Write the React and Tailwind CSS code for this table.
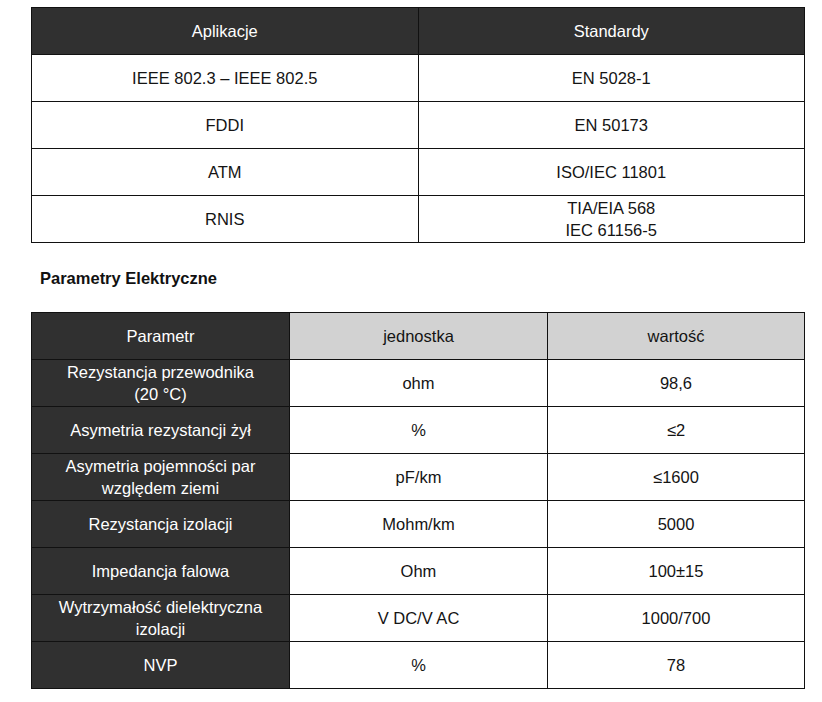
const apps = [
  { app: "IEEE 802.3 – IEEE 802.5", std: ["EN 5028-1"] },
  { app: "FDDI", std: ["EN 50173"] },
  { app: "ATM", std: ["ISO/IEC 11801"] },
  { app: "RNIS", std: ["TIA/EIA 568", "IEC 61156-5"] },
];

const params = [
  { name: ["Rezystancja przewodnika", "(20 °C)"], unit: "ohm", value: "98,6" },
  { name: ["Asymetria rezystancji żył"], unit: "%", value: "≤2" },
  { name: ["Asymetria pojemności par", "względem ziemi"], unit: "pF/km", value: "≤1600" },
  { name: ["Rezystancja izolacji"], unit: "Mohm/km", value: "5000" },
  { name: ["Impedancja falowa"], unit: "Ohm", value: "100±15" },
  { name: ["Wytrzymałość dielektryczna", "izolacji"], unit: "V DC/V AC", value: "1000/700" },
  { name: ["NVP"], unit: "%", value: "78" },
];

const Lines = ({ lines }) =>
  lines.map((l, i) => (
    <div key={i} className="leading-[22px]">
      {l}
    </div>
  ));

export default function App() {
  return (
    <div className="w-[822px] h-[702px] bg-white text-[#141414] text-[16.5px] font-['Liberation_Sans',Arial,sans-serif] pt-[7px] pl-[31px]">
      {/* Applications / standards */}
      <table className="w-[774px] border-collapse table-fixed">
        <thead>
          <tr className="h-[47px]">
            <th className="border border-[#111] bg-[#303030] text-white font-normal w-1/2">Aplikacje</th>
            <th className="border border-[#111] bg-[#303030] text-white font-normal">Standardy</th>
          </tr>
        </thead>
        <tbody>
          {apps.map((r) => (
            <tr key={r.app} className="h-[47px]">
              <td className="border border-[#111] text-center">{r.app}</td>
              <td className="border border-[#111] text-center">
                <Lines lines={r.std} />
              </td>
            </tr>
          ))}
        </tbody>
      </table>

      <h2 className="font-bold text-[16.5px] text-[#111] ml-[9px] mt-[25px] leading-[20px]">Parametry Elektryczne</h2>

      {/* Electrical parameters */}
      <table className="w-[774px] border-collapse table-fixed mt-[24px]">
        <thead>
          <tr className="h-[47px]">
            <th className="border border-[#111] bg-[#303030] text-white font-normal w-[258px]">Parametr</th>
            <th className="border border-[#111] bg-[#d2d2d2] font-normal w-[258px]">jednostka</th>
            <th className="border border-[#111] bg-[#d2d2d2] font-normal">wartość</th>
          </tr>
        </thead>
        <tbody>
          {params.map((p) => (
            <tr key={p.name[0]} className="h-[47px]">
              <td className="border border-[#111] bg-[#303030] text-white text-center">
                <Lines lines={p.name} />
              </td>
              <td className="border border-[#111] text-center">{p.unit}</td>
              <td className="border border-[#111] text-center">{p.value}</td>
            </tr>
          ))}
        </tbody>
      </table>
    </div>
  );
}
